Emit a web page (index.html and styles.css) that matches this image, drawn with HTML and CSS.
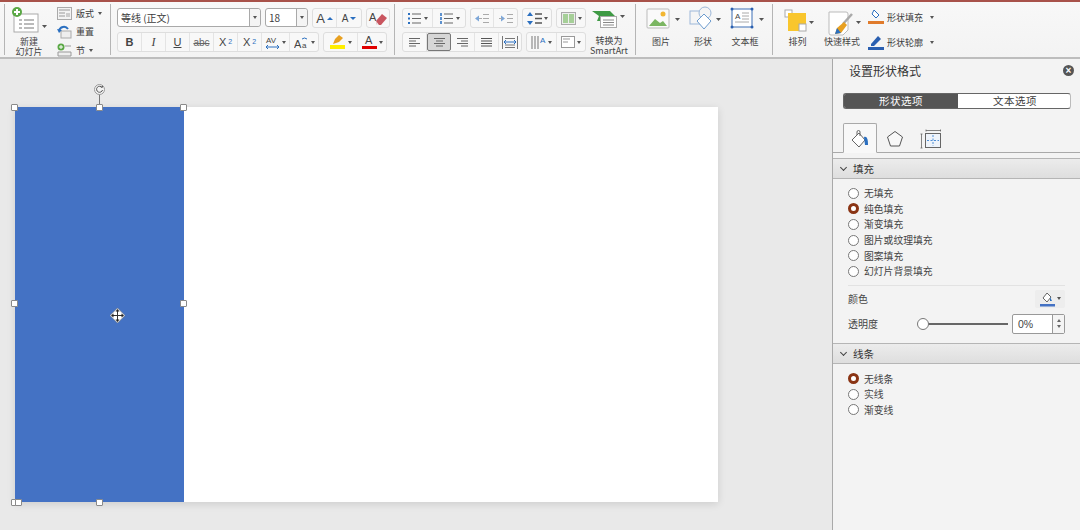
FILE: index.html
```html
<!DOCTYPE html>
<html lang="zh-CN">
<head>
<meta charset="utf-8">
<title>设置形状格式</title>
<link rel="stylesheet" href="styles.css">
</head>
<body>
<div class="app">
  <header class="ribbon">
    <section class="group g-slides">
      <div class="big new-slide">
        <svg width="36" height="26" viewBox="0 0 36 26"><rect x="3" y="7" width="24" height="18" fill="#fff" stroke="#aaa"/><path d="M8 13h3M13 13h10M8 17h3M13 17h10M8 21h3M13 21h10" stroke="#777" stroke-width="1"/><circle cx="6" cy="5" r="5" fill="#5aa845"/><path d="M3 5h6M6 2v6" stroke="#fff" stroke-width="2"/><path d="M31 18h5l-2.500 3z" fill="#555"/></svg>
        <span class="label">新建<br>幻灯片</span>
      </div>
      <div class="small-col">
        <div class="small-item"><svg width="15" height="13" viewBox="0 0 15 13"><rect x=".5" y=".5" width="14" height="12" fill="#f3f3f3" stroke="#aaa"/><path d="M2 3h11M2 6h6M2 9h6" stroke="#999"/><rect x="9" y="6" width="4" height="4" fill="#ccc"/></svg><span>版式</span><i class="caret"></i></div>
        <div class="small-item"><svg width="15" height="14" viewBox="0 0 15 14"><rect x="4" y="6" width="10" height="7" fill="#eee" stroke="#aaa"/><path d="M2 6a5 5 0 0 1 9-2" fill="none" stroke="#2a6fc0" stroke-width="2"/><path d="M0 4l2 4 3-3z" fill="#2a6fc0"/></svg><span>重置</span></div>
        <div class="small-item"><svg width="15" height="14" viewBox="0 0 15 14"><circle cx="4" cy="4" r="3.500" fill="#5aa845"/><path d="M2 4h4M4 2v4" stroke="#fff"/><path d="M8 3h6M1 9h13v4H1z" fill="#eee" stroke="#999"/></svg><span>节</span><i class="caret"></i></div>
      </div>
    </section>

    <section class="group g-font">
      <div class="row">
        <div class="select font-name"><span>等线 (正文)</span><b><i class="caret"></i></b></div>
        <div class="select font-size"><span>18</span><b><i class="caret"></i></b></div>
        <div class="seg">
          <div class="btn w24"><span class="ga">A</span><i class="up"></i></div>
          <div class="btn w24"><span class="gb">A</span><i class="down"></i></div>
        </div>
        <div class="seg">
          <div class="btn w22"><svg width="20" height="17" viewBox="0 0 20 17"><text x="1" y="11" class="svgt">A</text><path d="M8 11l6-7 5 4-6 7H9z" fill="#c9555f"/><path d="M8 11l3 4H9z" fill="#eee"/></svg></div>
        </div>
      </div>
      <div class="row">
        <div class="seg">
          <div class="btn w24 bold">B</div>
          <div class="btn w24 ital">I</div>
          <div class="btn w24 und">U</div>
          <div class="btn w24 strike">abc</div>
          <div class="btn w24 tt">X<sup>2</sup></div>
          <div class="btn w24 tt">X<sub>2</sub></div>
          <div class="btn w28"><svg width="15" height="15" viewBox="0 0 15 15"><text x="1" y="8" class="svgs">AV</text><path d="M1 12h13M1 12l2-2M1 12l2 2M14 12l-2-2M14 12l-2 2" stroke="#2a6fc0" fill="none"/></svg><i class="caret"></i></div>
          <div class="btn w28"><svg width="15" height="15" viewBox="0 0 15 15"><text x="0" y="13" class="svgt">A</text><text x="8" y="13" class="svgs">a</text><path d="M8 4a4 4 0 0 1 5 0" stroke="#2a6fc0" fill="none"/></svg><i class="caret"></i></div>
        </div>
        <div class="seg">
          <div class="btn w34"><svg width="17" height="16" viewBox="0 0 17 16"><rect x="1" y="11" width="15" height="4" fill="#ffee00"/><path d="M4 10l2-5 4-4 4 3-4 4z" fill="#e8a020"/></svg><i class="caret"></i></div>
          <div class="btn w28"><svg width="15" height="16" viewBox="0 0 15 16"><text x="3" y="10" class="svgt">A</text><rect x="0" y="12" width="15" height="3" fill="#e00000"/></svg><i class="caret"></i></div>
        </div>
      </div>
    </section>

    <section class="group g-para">
      <div class="para-main">
        <div class="row">
          <div class="seg">
            <div class="btn w30"><svg width="15" height="13" viewBox="0 0 15 13"><path d="M1 2h2M1 6.500h2M1 11h2" stroke="#2a6fc0" stroke-width="2"/><path d="M5 2h9M5 6.500h9M5 11h9" stroke="#666"/></svg><i class="caret"></i></div>
            <div class="btn w32"><svg width="15" height="13" viewBox="0 0 15 13"><path d="M2 1v3M2 5v3M2 9v3" stroke="#2a6fc0" stroke-width="1.500"/><path d="M5 2h9M5 6.500h9M5 11h9" stroke="#666"/></svg><i class="caret"></i></div>
          </div>
          <div class="seg">
            <div class="btn w23"><svg width="16" height="11" viewBox="0 0 16 11"><path d="M1 5.500l4-3v6z" fill="#7da7d9"/><path d="M5 5.500h3M9 1.500h6M9 5.500h6M9 9.500h6" stroke="#aaa"/></svg></div>
            <div class="btn w23"><svg width="16" height="11" viewBox="0 0 16 11"><path d="M7 5.500l-4-3v6z" fill="#7da7d9"/><path d="M1 5.500h3M9 1.500h6M9 5.500h6M9 9.500h6" stroke="#aaa"/></svg></div>
          </div>
          <div class="seg">
            <div class="btn w28"><svg width="15" height="15" viewBox="0 0 15 15"><path d="M3 1l3 4H0zM3 14l3-4H0z" fill="#2a6fc0"/><path d="M8 3h7M8 7.500h7M8 12h7" stroke="#555" stroke-width="1.300"/></svg><i class="caret"></i></div>
          </div>
          <div class="seg">
            <div class="btn w28"><svg width="15" height="13" viewBox="0 0 15 13"><rect x=".5" y=".5" width="14" height="12" fill="#eee" stroke="#aaa"/><rect x="2" y="2" width="5" height="9" fill="#a6cf98"/><rect x="8" y="2" width="5" height="9" fill="#a6cf98"/></svg><i class="caret"></i></div>
          </div>
        </div>
        <div class="row">
          <div class="seg">
            <div class="btn w24"><svg width="13" height="11" viewBox="0 0 13 11"><path d="M1 1.500h11M1 4h7M1 6.500h11M1 9h7" stroke="#666"/></svg></div>
            <div class="btn w24 pressed"><svg width="13" height="11" viewBox="0 0 13 11"><path d="M1 1.500h11M3 4h7M1 6.500h11M3 9h7" stroke="#666"/></svg></div>
            <div class="btn w24"><svg width="13" height="11" viewBox="0 0 13 11"><path d="M1 1.500h11M5 4h7M1 6.500h11M5 9h7" stroke="#666"/></svg></div>
            <div class="btn w24"><svg width="13" height="11" viewBox="0 0 13 11"><path d="M1 1.500h11M1 4h11M1 6.500h11M1 9h11" stroke="#555"/></svg></div>
            <div class="btn w22"><svg width="16" height="13" viewBox="0 0 16 13"><path d="M.5 0v13M15.500 0v13" stroke="#777"/><path d="M3 2.500h10M3 9h10M3 11.500h10" stroke="#777"/><path d="M2 6h12M2 6l2-2M2 6l2 2M14 6l-2-2M14 6l-2 2" stroke="#2a6fc0" fill="none"/></svg></div>
          </div>
          <div class="seg">
            <div class="btn w30"><svg width="15" height="15" viewBox="0 0 15 15"><path d="M1 1v13M4 1v13M7 1v13" stroke="#777"/><text x="9" y="8" class="svgs blue">A</text></svg><i class="caret"></i></div>
            <div class="btn w28"><svg width="14" height="12" viewBox="0 0 14 12"><rect x=".5" y=".5" width="13" height="11" fill="#fff" stroke="#999"/><path d="M2 3h7M2 6h5" stroke="#999"/></svg><i class="caret"></i></div>
          </div>
        </div>
      </div>
      <div class="big smartart">
        <svg width="36" height="20" viewBox="0 0 36 20"><path d="M2 2h18l5 5-3 5H7l2-5z" fill="#3f9a45"/><rect x="10.500" y="7.500" width="16" height="11" fill="#fff" stroke="#aaa"/><path d="M13 11h11M13 13.500h11M13 16h11" stroke="#888"/><path d="M30 6h5l-2.500 3z" fill="#555"/></svg>
        <span class="label">转换为<br>SmartArt</span>
      </div>
    </section>

    <section class="group g-insert">
      <div class="big"><svg width="36" height="26" viewBox="0 0 36 26"><rect x="1" y="3" width="22" height="19" rx="1" fill="#fafafa" stroke="#bbb"/><path d="M3 20l6-7 5 4 3-2 4 5z" fill="#7bb662"/><circle cx="17" cy="8" r="2.500" fill="#f2b632"/><path d="M29 12h5l-2.500 3z" fill="#555"/></svg><span class="label">图片</span></div>
      <div class="big"><svg width="34" height="26" viewBox="0 0 34 26"><rect x="1" y="5" width="13" height="13" fill="#f5f5f5" stroke="#9db8d9"/><circle cx="16" cy="7" r="6" fill="#f5f5f5" stroke="#9db8d9"/><path d="M15 8l7 7-7 8-7-8z" fill="#fff" stroke="#6d9ccf"/><path d="M27 12h5l-2.500 3z" fill="#555"/></svg><span class="label">形状</span></div>
      <div class="big"><svg width="36" height="26" viewBox="0 0 36 26"><rect x="2" y="3" width="20" height="18" fill="#fff" stroke="#3c6fb5"/><g fill="#2a5fb0"><circle cx="2" cy="3" r="1.500"/><circle cx="22" cy="3" r="1.500"/><circle cx="2" cy="21" r="1.500"/><circle cx="22" cy="21" r="1.500"/></g><text x="5" y="13" class="svgs">A</text><path d="M12 7h7M12 10h7M12 13h7M5 16h14" stroke="#aaa"/><path d="M29 12h5l-2.500 3z" fill="#555"/></svg><span class="label">文本框</span></div>
    </section>

    <section class="group g-draw">
      <div class="big"><svg width="32" height="28" viewBox="0 0 32 28"><rect x="1" y="1" width="7" height="7" fill="#fff" stroke="#aaa"/><rect x="4" y="4" width="18" height="18" fill="#f9c62d"/><rect x="15" y="15" width="7" height="7" fill="#fff" stroke="#aaa"/><path d="M25 12h5l-2.500 3z" fill="#555"/></svg><span class="label">排列</span></div>
      <div class="big"><svg width="36" height="28" viewBox="0 0 36 28"><path d="M2 3h17a2 2 0 0 1 2 2v16l-5 5H4a2 2 0 0 1-2-2z" fill="#fff" stroke="#bbb"/><path d="M25 5l-9 10" stroke="#aaa" stroke-width="2.500"/><path d="M17 13l3 3-6 8-6 1 2-6z" fill="#e8a020"/><path d="M10 19l4 5-6 1z" fill="#2a6fc0"/><path d="M29 12h5l-2.500 3z" fill="#555"/></svg><span class="label">快速样式</span></div>
      <div class="small-col wide">
        <div class="wide-item"><svg width="16" height="16" viewBox="0 0 16 16"><path d="M6 1l5 5-3 3-4-4z" fill="#fff" stroke="#2a6fc0"/><rect x="0" y="12" width="16" height="3" fill="#e07b2c"/></svg><span>形状填充</span><i class="caret"></i></div>
        <div class="wide-item"><svg width="16" height="16" viewBox="0 0 16 16"><path d="M3 10l7-8 3 3-7 7H3z" fill="#2a5fb0"/><rect x="0" y="13" width="16" height="3" fill="#2a5fb0"/></svg><span>形状轮廓</span><i class="caret"></i></div>
      </div>
    </section>
  </header>

  <div class="work">
    <main class="canvas">
      <div class="slide">
        <div class="shape">
          <span class="rotate-stem"></span>
          <span class="rotate"><svg width="9" height="9" viewBox="0 0 9 9"><path d="M7 2.500A3 3 0 1 0 7.500 5" fill="none" stroke="#555"/><path d="M5.500 2.500h2.500V.5z" fill="#555"/></svg></span>
          <span class="h tl"></span><span class="h tc"></span><span class="h tr"></span>
          <span class="h ml"></span><span class="h mr"></span>
          <span class="h bl"></span><span class="h bc"></span><span class="h br"></span>
          <svg class="move" width="15" height="15" viewBox="0 0 15 15"><path d="M7.500 0l7.500 7.500-7.500 7.500L0 7.500z" fill="#fff" stroke="#777" stroke-width=".6"/><path d="M7.500 2v11M2 7.500h11" stroke="#333"/><path d="M7.500 1l2 2.500h-4zM7.500 14l2-2.500h-4zM1 7.500l2.500-2v4zM14 7.500l-2.500-2v4z" fill="#222"/></svg>
        </div>
      </div>
    </main>

    <aside class="panel">
      <div class="panel-head"><h1>设置形状格式</h1><span class="close">×</span></div>
      <div class="switch"><span class="on">形状选项</span><span>文本选项</span></div>
      <div class="tabs">
        <div class="tab active"><svg width="20" height="19" viewBox="0 0 20 19"><path d="M2 10l7-7 6 7-6 7z" fill="#fff" stroke="#666"/><path d="M7 5V2a1.500 1.500 0 0 1 3 0v4" fill="none" stroke="#666"/><path d="M14 7c3-1 4 2 4 8h-3z" fill="#2a6fc0"/></svg></div>
        <div class="tab"><svg width="18" height="18" viewBox="0 0 18 18"><path d="M9 1.500l7.500 5.500-3 9h-9l-3-9z" fill="#f8f8f8" stroke="#555"/></svg></div>
        <div class="tab"><svg width="22" height="20" viewBox="0 0 22 20"><path d="M6 1.500h15M6 .5v2M20.500 .5v2M1.500 5v14M.5 5h2M.5 19h2" stroke="#666" stroke-width=".8" fill="none"/><rect x="5.500" y="4.500" width="15" height="14" fill="#eef3fa" stroke="#666"/><path d="M13 6v11M7 11.500h12" stroke="#4f8fd6" stroke-dasharray="2 1.500"/></svg></div>
      </div>
      <div class="sec-head"><i class="chev"></i><span>填充</span></div>
      <div class="sec-body">
        <label class="radio"><i></i><span>无填充</span></label>
        <label class="radio sel"><i></i><span>纯色填充</span></label>
        <label class="radio"><i></i><span>渐变填充</span></label>
        <label class="radio"><i></i><span>图片或纹理填充</span></label>
        <label class="radio"><i></i><span>图案填充</span></label>
        <label class="radio"><i></i><span>幻灯片背景填充</span></label>
        <div class="divider"></div>
        <div class="prop prop-color">
          <span>颜色</span>
          <div class="color-btn"><svg width="15" height="16" viewBox="0 0 15 16"><path d="M3 7l4-5 4 4-4 5z" fill="#fff" stroke="#666"/><path d="M10 6l2 4h-2z" fill="#2a6fc0"/><rect y="13" width="15" height="2.500" fill="#4472c4"/></svg><i class="caret"></i></div>
        </div>
        <div class="prop prop-alpha">
          <span class="alpha-label">透明度</span>
          <div class="slider"><i></i></div>
          <div class="spin"><span>0%</span><div class="arrows"><b class="a-up"></b><b class="a-down"></b></div></div>
        </div>
      </div>
      <div class="sec-head"><i class="chev"></i><span>线条</span></div>
      <div class="sec-body line-body">
        <label class="radio sel"><i></i><span>无线条</span></label>
        <label class="radio"><i></i><span>实线</span></label>
        <label class="radio"><i></i><span>渐变线</span></label>
      </div>
    </aside>
  </div>
</div>
</body>
</html>
```

FILE: styles.css
```css
* { box-sizing: border-box; }
html, body { margin: 0; height: 100%; }
body {
  width: 1080px;
  height: 530px;
  overflow: hidden;
  background: #e9e9e9;
  color: #3c3c3c;
  font-family: "Noto Sans CJK SC", "Liberation Sans", sans-serif;
  font-size: 10px;
}
.app { display: flex; flex-direction: column; height: 530px; }

/* ribbon */
.ribbon {
  display: flex;
  height: 59px;
  flex: none;
  padding: 2px 0 0 4px;
  background: linear-gradient(#f8f8f8, #f3f3f3);
  border-top: 2px solid #a8524a;
  border-bottom: 2px solid #bdbdbd;
}
.group {
  display: flex;
  height: 51px;
  flex: none;
  border-left: 1px solid #b5b5b5;
}
.g-slides { width: 106px; padding: 3px 0 0 4px; gap: 8px; }
.g-font { width: 284px; padding: 4px 0 0 6px; flex-direction: column; gap: 4px; }
.g-para { width: 241px; padding: 0 0 0 7px; gap: 4px; }
.g-insert { width: 137px; padding: 2px 0 0 10px; gap: 7px; }
.g-draw { width: 175px; padding: 5px 0 0 11px; gap: 8px; }
.para-main { display: flex; flex-direction: column; gap: 4px; padding-top: 4px; }
.row { display: flex; gap: 4px; height: 20px; }

.big {
  display: flex;
  flex-direction: column;
  align-items: center;
  font-size: 9px;
  line-height: 11px;
  color: #444;
}
.big svg { flex: none; }
.new-slide { width: 40px; line-height: 10px; }
.label { display: block; text-align: center; white-space: nowrap; margin-top: 4px; }
.smartart { width: 38px; padding-top: 5px; line-height: 10px; }
.smartart svg { align-self: flex-start; }
.smartart .label { margin-top: 7px; }
.g-insert .label { margin-right: 6px; }
.g-draw .label { margin-top: -1px; margin-right: 5px; }

.small-col { display: flex; flex-direction: column; gap: 4.500px; padding-top: 0; }
.small-item { display: flex; align-items: center; gap: 4px; height: 14px; font-size: 9px; }
.wide { gap: 7px; margin: -1px 0 0 -5px; }
.wide-item { display: flex; align-items: center; gap: 3px; height: 18px; font-size: 9px; }
.wide-item span { margin-right: 4px; }

.caret {
  display: inline-block;
  flex: none;
  width: 0;
  height: 0;
  border: 2.500px solid transparent;
  border-top: 3px solid #555;
  border-bottom: 0;
}

.select {
  display: flex;
  height: 19px;
  border: 1px solid #a9a9a9;
  border-radius: 3px;
  background: #fff;
  font-size: 10px;
  line-height: 17px;
}
.select span { flex: 1; padding-left: 3px; white-space: nowrap; }
.select b {
  display: flex;
  align-items: center;
  justify-content: center;
  width: 11px;
  background: #f4f4f4;
  border-left: 1px solid #a9a9a9;
  border-radius: 0 3px 3px 0;
}
.font-name { width: 144px; }
.font-size { width: 43px; }

.seg {
  display: flex;
  flex: none;
  height: 20px;
  border: 1px solid #dedede;
  border-radius: 3px;
  background: #f8f8f8;
}
.btn {
  display: flex;
  align-items: center;
  justify-content: center;
  gap: 2px;
  height: 100%;
  border-right: 1px solid #e4e4e4;
  color: #444;
  font-family: "Liberation Sans", sans-serif;
  font-size: 11px;
}
.btn:last-child { border-right: 0; }
.w22 { width: 22px; }
.w23 { width: 23px; }
.w24 { width: 24px; }
.w28 { width: 28px; }
.w30 { width: 30px; }
.w32 { width: 32px; }
.w34 { width: 34px; }
.ga { font-size: 13px; }
.gb { font-size: 10px; }
.up, .down { width: 0; height: 0; border: 3px solid transparent; }
.up { border-bottom: 3px solid #2a6fc0; border-top: 0; }
.down { border-top: 3px solid #2a6fc0; border-bottom: 0; }
.bold { font-weight: 700; }
.ital { font-style: italic; font-family: "Liberation Serif", serif; font-size: 12px; }
.und { text-decoration: underline; }
.strike { text-decoration: line-through; font-size: 10px; color: #666; }
.tt sup, .tt sub { font-size: 7px; color: #2a6fc0; line-height: 0; }
.pressed {
  background: #d6d6d6;
  border: 1px solid #777;
  border-radius: 2px;
}
.svgt { font: 11px "Liberation Sans", sans-serif; fill: #444; }
.svgs { font: 8px "Liberation Sans", sans-serif; fill: #444; }
.blue { fill: #2a6fc0; }

/* work area */
.work { display: flex; flex: 1; min-height: 0; }
.canvas { flex: 1; padding: 48px 0 0 15px; background: #e9e9e9; }
.slide {
  width: 703px;
  height: 395px;
  background: #fff;
  box-shadow: 0 2px 8px rgba(0, 0, 0, .12);
}
.shape { position: relative; width: 169px; height: 395px; background: #4472c4; }
.h {
  position: absolute;
  width: 7px;
  height: 7px;
  background: #fff;
  border: 1px solid #8a8a8a;
  border-radius: 1px;
}
.tl, .ml, .bl { left: -4px; }
.tc, .bc { left: 81px; }
.tr, .mr { right: -3px; }
.tl, .tc, .tr { top: -3px; }
.ml, .mr { top: 193px; }
.bl, .bc, .br { bottom: -4px; }
.rotate {
  position: absolute;
  left: 79px;
  top: -23px;
  display: flex;
  align-items: center;
  justify-content: center;
  width: 11px;
  height: 11px;
  border: 1px solid #999;
  border-radius: 50%;
  background: #f3f3f3;
}
.rotate-stem { position: absolute; left: 84px; top: -13px; width: 1px; height: 11px; background: #777; }
.move { position: absolute; left: 95px; top: 201px; }

/* panel */
.panel {
  flex: none;
  width: 248px;
  background: #f3f3f3;
  border-left: 1px solid #a9a9a9;
}
.panel-head { display: flex; align-items: center; justify-content: space-between; height: 22px; padding: 0 6px 0 16px; }
.panel-head h1 { margin: 0; font-size: 12px; font-weight: 400; color: #333; }
.close {
  display: flex;
  align-items: center;
  justify-content: center;
  width: 11px;
  height: 11px;
  border-radius: 50%;
  background: #555;
  color: #fff;
  font: 700 10px/11px "Liberation Sans", sans-serif;
}
.switch {
  display: flex;
  width: 228px;
  height: 16px;
  margin: 12px 0 0 10px;
  border: 1px solid #666;
  border-right-color: #bbb;
  border-radius: 3px;
  background: #fff;
  font-size: 10.500px;
  line-height: 14px;
  overflow: hidden;
}
.switch span { width: 113px; padding-left: 2px; text-align: center; letter-spacing: .5px; }
.switch .on { background: #555; color: #fff; width: 115px; padding-left: 0; }
.tabs {
  display: flex;
  height: 30px;
  margin-top: 14px;
  padding-left: 10px;
  border-bottom: 1px solid #a9a9a9;
}
.tab {
  display: flex;
  align-items: center;
  justify-content: center;
  width: 36px;
  height: 30px;
  padding-top: 2px;
}
.tab.active {
  width: 34px;
  background: #f8f8f8;
  border: 1px solid #a9a9a9;
  border-bottom-color: #f8f8f8;
  border-radius: 2px 2px 0 0;
}
.sec-head {
  display: flex;
  align-items: center;
  gap: 6px;
  height: 21px;
  margin-top: 5px;
  padding-left: 7px;
  background: linear-gradient(#ececec, #dedede);
  border-top: 1px solid #b5b5b5;
  border-bottom: 1px solid #b5b5b5;
  font-size: 10.500px;
  color: #333;
}
.chev {
  width: 5px;
  height: 5px;
  margin: -3px 1px 0 1px;
  border-right: 1px solid #444;
  border-bottom: 1px solid #444;
  transform: rotate(45deg);
}
.sec-body { padding: 6.500px 15px 0; height: 164px; }
.sec-body + .sec-head { margin-top: 0; }
.line-body { height: auto; padding-top: 7px; }
.radio {
  display: flex;
  align-items: center;
  gap: 5px;
  height: 15.600px;
  font-size: 9.800px;
  color: #444;
}
.radio i {
  flex: none;
  width: 11px;
  height: 11px;
  border: 1px solid #777;
  border-radius: 50%;
  background: #fff;
}
.radio.sel i { border: 3px solid #8a3414; }
.divider { height: 1px; margin-top: 5.500px; background: #e2e2e2; }
.prop { display: flex; align-items: center; font-size: 10px; color: #444; }
.prop-color { justify-content: space-between; height: 18px; margin-top: 4px; }
.color-btn {
  display: flex;
  align-items: center;
  justify-content: center;
  gap: 2px;
  width: 30px;
  height: 18px;
  background: #ededed;
  border-radius: 2px;
}
.prop-alpha { height: 20px; margin-top: 6px; }
.alpha-label { width: 69px; }
.slider { position: relative; width: 86px; height: 2px; margin-left: 5px; background: #666; }
.slider i {
  position: absolute;
  left: -5px;
  top: -5px;
  width: 12px;
  height: 12px;
  border: 1px solid #777;
  border-radius: 50%;
  background: #fff;
}
.spin {
  display: flex;
  width: 53px;
  height: 20px;
  margin-left: 4px;
  border: 1px solid #999;
  border-radius: 2px;
  background: #fff;
  line-height: 18px;
  font-family: "Liberation Sans", sans-serif;
  font-size: 10.500px;
}
.spin span { flex: 1; padding-left: 5px; }
.arrows {
  display: flex;
  flex-direction: column;
  align-items: center;
  justify-content: space-around;
  width: 12px;
  padding: 3px 0;
  background: #f4f4f4;
  border-left: 1px solid #999;
}
.a-up, .a-down { width: 0; height: 0; border: 2.500px solid transparent; }
.a-up { border-bottom: 3px solid #666; border-top: 0; }
.a-down { border-top: 3px solid #666; border-bottom: 0; }
```
